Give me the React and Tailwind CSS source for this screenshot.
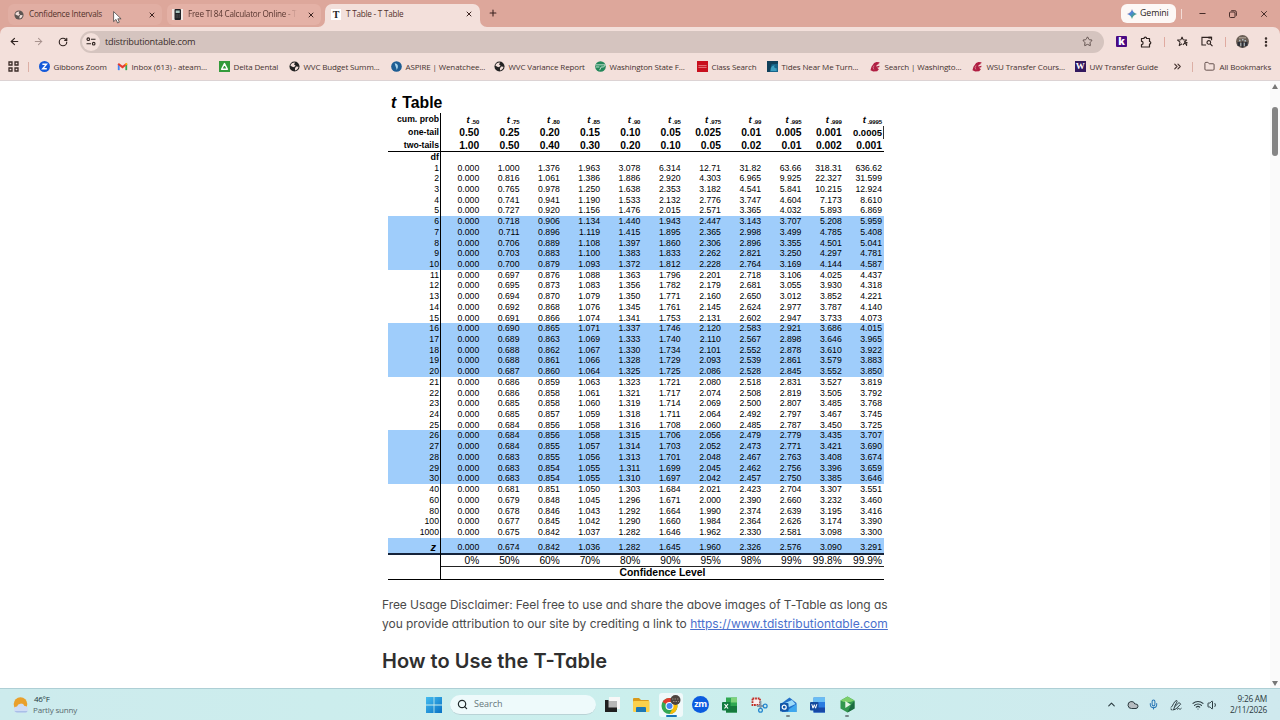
import {
    ArrowLeft, ArrowRight, RotateCw, X, Plus, Minus, Star, Search, ChevronUp, ChevronsRight,
    Folder, Wifi, Volume1, Mic, EllipsisVertical, Cloud,
} from "lucide-react";

const columns = [
    [".50", "0.50", "1.00", "0%"],
    [".75", "0.25", "0.50", "50%"],
    [".80", "0.20", "0.40", "60%"],
    [".85", "0.15", "0.30", "70%"],
    [".90", "0.10", "0.20", "80%"],
    [".95", "0.05", "0.10", "90%"],
    [".975", "0.025", "0.05", "95%"],
    [".99", "0.01", "0.02", "98%"],
    [".995", "0.005", "0.01", "99%"],
    [".999", "0.001", "0.002", "99.8%"],
    [".9995", "0.0005", "0.001", "99.9%"],
];

const tableData = `1 0.000 1.000 1.376 1.963 3.078 6.314 12.71 31.82 63.66 318.31 636.62
2 0.000 0.816 1.061 1.386 1.886 2.920 4.303 6.965 9.925 22.327 31.599
3 0.000 0.765 0.978 1.250 1.638 2.353 3.182 4.541 5.841 10.215 12.924
4 0.000 0.741 0.941 1.190 1.533 2.132 2.776 3.747 4.604 7.173 8.610
5 0.000 0.727 0.920 1.156 1.476 2.015 2.571 3.365 4.032 5.893 6.869
6 0.000 0.718 0.906 1.134 1.440 1.943 2.447 3.143 3.707 5.208 5.959
7 0.000 0.711 0.896 1.119 1.415 1.895 2.365 2.998 3.499 4.785 5.408
8 0.000 0.706 0.889 1.108 1.397 1.860 2.306 2.896 3.355 4.501 5.041
9 0.000 0.703 0.883 1.100 1.383 1.833 2.262 2.821 3.250 4.297 4.781
10 0.000 0.700 0.879 1.093 1.372 1.812 2.228 2.764 3.169 4.144 4.587
11 0.000 0.697 0.876 1.088 1.363 1.796 2.201 2.718 3.106 4.025 4.437
12 0.000 0.695 0.873 1.083 1.356 1.782 2.179 2.681 3.055 3.930 4.318
13 0.000 0.694 0.870 1.079 1.350 1.771 2.160 2.650 3.012 3.852 4.221
14 0.000 0.692 0.868 1.076 1.345 1.761 2.145 2.624 2.977 3.787 4.140
15 0.000 0.691 0.866 1.074 1.341 1.753 2.131 2.602 2.947 3.733 4.073
16 0.000 0.690 0.865 1.071 1.337 1.746 2.120 2.583 2.921 3.686 4.015
17 0.000 0.689 0.863 1.069 1.333 1.740 2.110 2.567 2.898 3.646 3.965
18 0.000 0.688 0.862 1.067 1.330 1.734 2.101 2.552 2.878 3.610 3.922
19 0.000 0.688 0.861 1.066 1.328 1.729 2.093 2.539 2.861 3.579 3.883
20 0.000 0.687 0.860 1.064 1.325 1.725 2.086 2.528 2.845 3.552 3.850
21 0.000 0.686 0.859 1.063 1.323 1.721 2.080 2.518 2.831 3.527 3.819
22 0.000 0.686 0.858 1.061 1.321 1.717 2.074 2.508 2.819 3.505 3.792
23 0.000 0.685 0.858 1.060 1.319 1.714 2.069 2.500 2.807 3.485 3.768
24 0.000 0.685 0.857 1.059 1.318 1.711 2.064 2.492 2.797 3.467 3.745
25 0.000 0.684 0.856 1.058 1.316 1.708 2.060 2.485 2.787 3.450 3.725
26 0.000 0.684 0.856 1.058 1.315 1.706 2.056 2.479 2.779 3.435 3.707
27 0.000 0.684 0.855 1.057 1.314 1.703 2.052 2.473 2.771 3.421 3.690
28 0.000 0.683 0.855 1.056 1.313 1.701 2.048 2.467 2.763 3.408 3.674
29 0.000 0.683 0.854 1.055 1.311 1.699 2.045 2.462 2.756 3.396 3.659
30 0.000 0.683 0.854 1.055 1.310 1.697 2.042 2.457 2.750 3.385 3.646
40 0.000 0.681 0.851 1.050 1.303 1.684 2.021 2.423 2.704 3.307 3.551
60 0.000 0.679 0.848 1.045 1.296 1.671 2.000 2.390 2.660 3.232 3.460
80 0.000 0.678 0.846 1.043 1.292 1.664 1.990 2.374 2.639 3.195 3.416
100 0.000 0.677 0.845 1.042 1.290 1.660 1.984 2.364 2.626 3.174 3.390
1000 0.000 0.675 0.842 1.037 1.282 1.646 1.962 2.330 2.581 3.098 3.300`
    .split("\n")
    .map((line) => line.trim().split(" "));

const zRow = ["0.000", "0.674", "0.842", "1.036", "1.282", "1.645", "1.960", "2.326", "2.576", "3.090", "3.291"];

const DarkGlobe = ({ className = "w-[11px] h-[11px]", fill = "#222" }) => (
    <svg className={className} viewBox="0 0 12 12">
        <circle cx="6" cy="6" r="5.500" fill={fill} />
        <path d="M1.500 5C2.200 2.800 4.500 1.500 6.500 1.800L5.500 3.800 7.200 5 5.500 6.800 3.500 6.400ZM7.600 6l2.800.3C10 8.500 8.600 10 6.600 10.300L6.500 8.200Z" fill="#f2dfda" />
    </svg>
);

const Cougar = () => (
    <svg className="w-[11px] h-[11px]" viewBox="0 0 12 12">
        <path d="M4.500 2.200 7 1l4 .4-2.200 1 1.600.7-3 1.200L6.700 6l3.800-.8-.5 1.600-2.300.6 2 1.600-1.900 2.200-4.300.3L.5 10 1.600 6.300Z" fill="#b01e42" />
        <path d="M4.400 5 3.400 7.300l.8 1.900" stroke="#f2dfda" strokeWidth=".5" fill="none" />
    </svg>
);

const bookmarks = [
    {
        title: "Gibbons Zoom",
        width: "w-[78px]",
        icon: (
            <svg className="w-[11px] h-[11px]" viewBox="0 0 12 12">
                <circle cx="6" cy="6" r="6" fill="#1459d9" />
                <path d="M3.700 3.500h4.500L4 8.500h4.500" stroke="#fff" strokeWidth="1.500" fill="none" />
            </svg>
        ),
    },
    {
        title: "Inbox (613) - ateam...",
        width: "w-[102px]",
        icon: (
            <svg className="w-[11px] h-[11px]" viewBox="0 0 12 12">
                <path d="M1.900 10V3.500" stroke="#4285f4" strokeWidth="2" />
                <path d="M10.100 10V3.500" stroke="#34a853" strokeWidth="2" />
                <path d="M1.300 3l4.700 3.700L10.700 3" stroke="#e63b2e" strokeWidth="2.200" fill="none" />
                <path d="M9.200 5V2.800l1.900-.8v2Z" fill="#fbbc04" />
            </svg>
        ),
    },
    {
        title: "Delta Dental",
        width: "w-[70px]",
        icon: (
            <svg className="w-[11px] h-[11px]" viewBox="0 0 12 12">
                <path d="M0 0h12v12H0Z" fill="#349b3b" />
                <path d="M6 2.800 9.200 9H2.800Z" stroke="#fff" strokeWidth="1.500" fill="none" strokeLinejoin="round" />
            </svg>
        ),
    },
    { title: "WVC Budget Summ...", width: "w-[102px]", icon: <DarkGlobe /> },
    {
        title: "ASPIRE | Wenatchee...",
        width: "w-[103px]",
        icon: (
            <svg className="w-[11px] h-[11px]" viewBox="0 0 12 12">
                <circle cx="6" cy="6" r="5.800" fill="#1d5d93" />
                <path d="M4 2.500c4 .5 4.500 4 2.200 7.200C6 7 4.500 5.500 4 2.500Z" fill="#a9d4ec" />
            </svg>
        ),
    },
    { title: "WVC Variance Report", width: "w-[101px]", icon: <DarkGlobe /> },
    {
        title: "Washington State F...",
        width: "w-[102px]",
        icon: (
            <svg className="w-[11px] h-[11px]" viewBox="0 0 12 12">
                <circle cx="6" cy="6" r="5.800" fill="#23875a" />
                <path d="M.8 4.200h10.500L9.500 6.500H6.800L5 10M1 6.500h3.800" stroke="#cfe6d8" strokeWidth="1" fill="none" />
            </svg>
        ),
    },
    {
        title: "Class Search",
        width: "w-[70px]",
        icon: (
            <svg className="w-[11px] h-[11px]" viewBox="0 0 12 12">
                <path d="M0 0h12v12H0Z" fill="#c8101e" />
                <path d="M1.500 5h9M1.500 7h9" stroke="#f09ca0" strokeWidth=".8" />
            </svg>
        ),
    },
    {
        title: "Tides Near Me Turn...",
        width: "w-[103px]",
        icon: (
            <svg className="w-[11px] h-[11px]" viewBox="0 0 12 12">
                <path d="M0 0h12v12H0Z" fill="#17658a" />
                <path d="M0 0h12v3L5 3.500 3 12H0Z" fill="#10405a" />
                <path d="M4 10c0-4 2-5.500 5-5-2 .5-1.500 3 1.500 3v3H4Z" fill="#3d9fc0" />
            </svg>
        ),
    },
    { title: "Search | Washingto...", width: "w-[102px]", icon: <Cougar /> },
    { title: "WSU Transfer Cours...", width: "w-[103px]", icon: <Cougar /> },
    {
        title: "UW Transfer Guide",
        width: "w-[98px]",
        icon: <span className="w-[11px] h-[11px] bg-[#33195f] text-white text-[9px] leading-[11px] font-bold text-center tracking-[-0.5px] font-['Liberation_Serif',serif]">W</span>,
    },
];

const TabTitle = ({ children, className = "" }) => (
    <span className={`whitespace-nowrap text-[8.200px] tracking-[-0.25px] text-[#54322c] ${className}`}>{children}</span>
);

const TabStrip = () => (
    <div className="h-[27px] flex items-end bg-[#dda79b] relative">
        <div className="ml-2 w-[154px] h-[21px] mb-[2px] rounded-md bg-[#e1aea3] flex items-center pl-[6px] pr-[6px]">
            <DarkGlobe className="w-[10px] h-[10px]" fill="#5d5552" />
            <TabTitle className="ml-[5px]">Confidence Intervals</TabTitle>
            <X className="ml-auto w-[8px] h-[8px] text-[#3b2320]" strokeWidth={3} />
        </div>
        <div className="ml-[5px] w-[154px] h-[21px] mb-[2px] rounded-md bg-[#e4b1a6] flex items-center pl-[5px] pr-[6px]">
            <svg className="w-[11px] h-[11px] shrink-0" viewBox="0 0 11 11">
                <path d="M0 0h11v11H0Z" fill="#f3e9e5" />
                <rect x="2.500" y="0" width="6.500" height="11" rx="1" fill="#202226" />
                <path d="M3.700 1.500h4v2.500h-4Z" fill="#a9c6c0" />
                <path d="M3.700 6h4M3.700 8h4" stroke="#777" strokeWidth=".8" strokeDasharray="1 .5" />
            </svg>
            <TabTitle className="ml-[5px] bg-linear-to-r from-[#54322c] from-88% to-[#e4b1a6] bg-clip-text text-transparent">Free TI 84 Calculator Online - T</TabTitle>
            <X className="ml-auto w-[8px] h-[8px] text-[#3b2320] shrink-0" strokeWidth={3} />
        </div>
        <svg className="w-[7px] h-[7px] ml-[-3px]" viewBox="0 0 7 7"><path d="M7 0v7H0A7 7 0 0 0 7 0Z" fill="#f3e0db" /></svg>
        <div className="w-[155px] h-[23px] rounded-t-[7px] bg-[#f3e0db] flex items-center pl-[6px] pr-[7px] pb-[3px]">
            <span className="w-[10px] h-[11px] bg-white text-[#222] font-bold text-[10px] leading-[11px] text-center font-['Liberation_Serif',serif]">T</span>
            <TabTitle className="ml-[5px]">T Table - T Table</TabTitle>
            <X className="ml-auto w-[8px] h-[8px] text-[#3b2320]" strokeWidth={3} />
        </div>
        <svg className="w-[7px] h-[7px]" viewBox="0 0 7 7"><path d="M0 0v7h7A7 7 0 0 1 0 0Z" fill="#f3e0db" /></svg>
        <Plus className="w-[10px] h-[10px] ml-[1px] mb-[9px] text-[#3b2320]" strokeWidth={2.600} />
        <div className="ml-auto h-[27px] flex items-center">
            <div className="w-[55px] h-[19px] rounded-[6px] bg-[#fdf8f6] flex items-center pl-[6px]">
                <svg className="w-[10px] h-[10px]" viewBox="0 0 10 10">
                    <defs>
                        <linearGradient id="gem" x1="0" y1="0" x2="1" y2="1">
                            <stop offset=".1" stopColor="#e8745c" />
                            <stop offset=".4" stopColor="#4b85dd" />
                            <stop offset=".8" stopColor="#47a86b" />
                        </linearGradient>
                    </defs>
                    <path d="M5 0C5.600 2.600 7.400 4.400 10 5 7.400 5.600 5.600 7.400 5 10 4.400 7.400 2.600 5.600 0 5 2.600 4.400 4.400 2.600 5 0Z" fill="url(#gem)" />
                </svg>
                <span className="ml-[3px] text-[8.800px] text-[#2b2321] tracking-[-0.1px]">Gemini</span>
            </div>
            <span className="w-px h-[10px] bg-[#f3dcd6] ml-[5px]" />
            <Minus className="w-[9px] h-[9px] ml-[16px] text-[#3b2320]" strokeWidth={2.500} />
            <svg className="w-[8px] h-[8px] ml-[22px] text-[#3b2320]" viewBox="0 0 8 8" fill="none" stroke="currentColor" strokeWidth=".9">
                <rect x=".5" y="2" width="5.500" height="5.500" rx="1" />
                <path d="M2.200.7h3.600q1.600 0 1.600 1.600v3.500" />
            </svg>
            <X className="w-[10px] h-[10px] ml-[22px] mr-[11px] text-[#3b2320]" strokeWidth={2.200} />
        </div>
        <svg className="absolute left-[113px] top-[11px] w-[10px] h-[13px]" viewBox="0 0 10 13">
            <path d="M.6.600v10l2.400-2.200 1.600 3.600 1.700-.8L4.800 7.800h3.300Z" fill="#fff" stroke="#333" strokeWidth=".7" />
        </svg>
    </div>
);

const Toolbar = () => (
    <div className="bg-[#dda79b]">
        <div className="h-[29px] rounded-t-[7px] bg-[#f3e0db] flex items-center text-[#2f2320]">
            <ArrowLeft className="w-[11px] h-[11px] ml-[9px]" strokeWidth={2.500} />
            <ArrowRight className="w-[11px] h-[11px] ml-[13px] text-[#a8938e]" strokeWidth={2.300} />
            <RotateCw className="w-[10px] h-[10px] ml-[14px]" strokeWidth={2.700} />
            <div className="ml-[12px] w-[1024px] h-[22px] rounded-full bg-[#d5c4bf] flex items-center pl-[2px] pr-[11px]">
                <span className="w-[18px] h-[18px] rounded-full bg-[#f3e0db] flex items-center justify-center">
                    <svg className="w-[10px] h-[9px]" viewBox="0 0 10 9" fill="none" stroke="currentColor" strokeWidth="1.100">
                        <circle cx="2.300" cy="2.200" r="1.300" /><path d="M5 2.200h4.500M.5 6.700H5" /><circle cx="7.700" cy="6.700" r="1.300" />
                    </svg>
                </span>
                <span className="ml-[5px] text-[9.200px] tracking-[-0.230px] text-[#3a2d2a]">tdistributiontable.com</span>
                <Star className="ml-auto w-[11px] h-[11px] text-[#5b4c48]" strokeWidth={2} />
            </div>
            <span className="ml-[12px] w-[11px] h-[11px] rounded-[1px] bg-[#4a0a83] text-white text-[10px] leading-[10px] font-extrabold text-center">k</span>
            <svg className="ml-[13px] w-[12px] h-[12px]" viewBox="0 0 12 12" fill="none" stroke="currentColor" strokeWidth="1.200" strokeLinejoin="round">
                <path d="M1.500 2.500H4a1.300 1.300 0 0 1 2.600 0h2.900v3a1.300 1.300 0 0 1 0 2.600v2.900h-8V8.500a1.600 1.600 0 0 0 0-3.200Z" />
            </svg>
            <span className="ml-[12px] w-px h-[10px] bg-[#e0aaa0]" />
            <svg className="ml-[12px] w-[11px] h-[11px]" viewBox="0 0 12 12" fill="none" stroke="currentColor" strokeWidth="1.100" strokeLinejoin="round">
                <path d="M5.500 1 6.800 4.200l3.700.3-2.800 2.300M5.500 1 4.200 4.200.6 4.500l2.700 2.300-.9 3.700 3.100-2M6.500 9.700l2-2.200 1.700 2M8.500 6.500l3 .8M10.500 8v3" />
            </svg>
            <svg className="ml-[13px] w-[12px] h-[11px]" viewBox="0 0 13 12" fill="none" stroke="currentColor" strokeWidth="1.200">
                <path d="M5.500 9.800H1V1.500h10.500v3" /><path d="M8 1.800h3.500" strokeWidth="2" /><circle cx="8.500" cy="7" r="2" /><path d="m10 8.500 2.500 2.500" />
            </svg>
            <span className="ml-[12px] w-px h-[10px] bg-[#e0aaa0]" />
            <svg className="ml-[10px] w-[13px] h-[13px]" viewBox="0 0 13 13">
                <circle cx="6.500" cy="6.500" r="6.500" fill="#6b5f56" />
                <path d="M3 2h7v1.500H3Z" fill="#a09488" />
                <path d="M1.500 7h2.500v4h-2.500ZM5.500 6.500h2v6h-2ZM9 7h2.500V11H9Z" fill="#2e3038" />
                <path d="M3 4.800h1.500v1.500H3ZM6 4h1.500v1.500H6ZM8.500 5h1.500v1.500H8.500ZM4.300 8h1v3h-1ZM7.800 8h1v3h-1Z" fill="#adbcc3" />
            </svg>
            <EllipsisVertical className="ml-[11px] w-[12px] h-[12px]" strokeWidth={3} />
        </div>
    </div>
);

const BookmarkBar = () => (
    <div className="h-[25px] bg-[#f3e0db] border-b border-[#dcd3d4] flex items-center pb-[3px] text-[#463330] text-[8px] tracking-[-0.13px] whitespace-nowrap">
        <svg className="ml-[8px] w-[11px] h-[11px] shrink-0" viewBox="0 0 11 11" fill="none" stroke="#3b2c29" strokeWidth="1.300">
            <path d="M1 1h3v3H1ZM7 1h3v3H7ZM1 7h3v3H1ZM7 7h3v3H7Z" />
        </svg>
        <span className="ml-[9px] mr-[9.500px] w-px h-[10px] bg-[#dcafa5]" />
        {bookmarks.map((item) => (
            <div key={item.title} className={`flex items-center gap-[4px] shrink-0 ${item.width}`}>
                <span className="flex shrink-0">{item.icon}</span>
                <span>{item.title}</span>
            </div>
        ))}
        <ChevronsRight className="-ml-[1px] w-[11px] h-[11px] shrink-0" strokeWidth={2.500} />
        <span className="ml-[9px] w-px h-[10px] bg-[#dcafa5]" />
        <Folder className="ml-[11px] w-[11px] h-[11px] shrink-0" strokeWidth={1.800} />
        <span className="ml-[5px]">All Bookmarks</span>
    </div>
);

const Row = ({ label, values, className = "", labelClass = "" }) => (
    <div className={`grid grid-cols-[53px_repeat(11,1fr)] text-right ${className}`}>
        <div className={`border-r border-black ${labelClass}`}>{label}</div>
        {values.map((value, i) => (
            <div key={i} className="pr-[2px]">{value}</div>
        ))}
    </div>
);

const TTable = () => (
    <div className="w-[496px] text-black font-['Liberation_Sans',sans-serif]">
        <h2 className="h-[21px] leading-[21px] pl-[3px] text-[15.800px] font-bold"><i>t</i><span className="ml-[6px]">Table</span></h2>
        <div className="border-b border-black font-bold text-[10.300px]">
            <Row
                label="cum. prob"
                labelClass="text-[8.700px] pr-[1px]"
                className="h-[13px] leading-[13px]"
                values={columns.map((c) => (
                    <span key={c[0]}><i className="text-[9.500px]">t</i><span className="text-[6px] tracking-[-0.1px] relative top-[1px] ml-[1.500px]">{c[0]}</span></span>
                ))}
            />
            <Row
                label="one-tail"
                labelClass="text-[8.700px] pr-[1px]"
                className="h-[12.500px] leading-[13px]"
                values={columns.map((c, i) => (i === 10 ? <div key={i} className="text-[9.500px] -mr-[2px] pr-[1px] border-r border-[#333]">{c[1]}</div> : c[1]))}
            />
            <Row label="two-tails" labelClass="text-[8.700px] pr-[1px]" className="h-[12.500px] leading-[13px]" values={columns.map((c) => c[2])} />
        </div>
        <Row label="df" labelClass="font-bold pr-[1px]" className="h-[10.500px] leading-[11px] text-[9px]" values={columns.map(() => "")} />
        {tableData.map(([df, ...values], i) => (
            <Row
                key={df}
                label={df}
                values={values}
                labelClass="pr-[1px]"
                className={`h-[10.720px] leading-[10.720px] text-[8.700px] ${i < 30 && Math.floor(i / 5) % 2 === 1 ? "bg-[#9fcdfb]" : ""}`}
            />
        ))}
        <div className="border-b-2 border-[#15233a]">
            <Row
                label={<i>z</i>}
                labelClass="font-bold text-[11px] pr-[4px]"
                values={zRow}
                className="h-[15px] leading-[18px] text-[8.700px] bg-[#9fcdfb]"
            />
        </div>
        <Row label="" values={columns.map((c) => c[3])} className="h-[11px] leading-[12px] text-[10.200px]" />
        <div className="h-[14px] flex border-b border-black">
            <div className="w-[53px] border-r border-black" />
            <div className="flex-1 border-t border-[#222] text-center text-[10.400px] leading-[12px] font-bold">Confidence Level</div>
        </div>
    </div>
);

const Page = () => (
    <div className="h-[607px] bg-white flex overflow-hidden">
        <div className="flex-1 pt-[11px] pl-[388px]">
            <TTable />
            <div className="-ml-[6px] mt-[15px] font-['Inter',sans-serif] text-[#4a4a4a]">
                <p className="text-[12px] leading-[19.300px] whitespace-nowrap [font-feature-settings:'cv11']">
                    <span className="tracking-[-0.075px]">Free Usage Disclaimer: Feel free to use and share the above images of T-Table as long as</span>
                    <br />
                    <span className="tracking-[-0.03px]">you provide attribution to our site by crediting a link to </span>
                    <a className="text-[#4a70cd] underline tracking-[0.04px]">https://www.tdistributiontable.com</a>
                </p>
                <h1 className="mt-[13px] text-[20px] leading-[30px] font-semibold text-[#2f2f2f] whitespace-nowrap [font-feature-settings:'cv11']">How to Use the T-Table</h1>
            </div>
        </div>
        <div className="w-[10px] bg-[#fafafa] flex flex-col items-center pt-[3px] pb-[2px]">
            <svg className="w-[6px] h-[5px]" viewBox="0 0 6 5"><path d="M3 0l3 5H0Z" fill="#777" /></svg>
            <div className="mt-[18px] w-[6px] h-[49px] rounded-full bg-[#858585]" />
            <svg className="w-[6px] h-[5px] mt-auto" viewBox="0 0 6 5"><path d="M0 0h6L3 5Z" fill="#777" /></svg>
        </div>
    </div>
);

const appIcons = [
    {
        name: "desktops",
        icon: (
            <svg className="w-[16px] h-[16px] -ml-[2px]" viewBox="0 0 16 16">
                <path d="M5 0h11v12H5Z" fill="#f8f8f8" /><path d="M4 4h9v8H4Z" fill="#b7b7b7" /><path d="M1 3h3.500v7.500H13V15H1Z" fill="#1f1f1f" />
            </svg>
        ),
    },
    {
        name: "files",
        icon: (
            <svg className="w-[17px] h-[16px]" viewBox="0 0 17 16">
                <path d="M0 2q0-1 1-1h5l2 2h7q1 0 1 1v3H0Z" fill="#d99a1b" /><rect y="4" width="16.500" height="11" rx="1" fill="#fbd14b" /><path d="M3 15v-4q0-1 1-1h8q1 0 1 1v4Z" fill="#1d78b4" />
            </svg>
        ),
    },
    {
        name: "chrome",
        active: true,
        icon: (
            <svg className="w-[20px] h-[20px]" viewBox="0 0 20 20">
                <circle cx="8.500" cy="11" r="8" fill="#34a853" />
                <path d="M8.500 11 1.600 7A8 8 0 0 1 15.400 7H8.500Z" fill="#e33b2e" />
                <path d="M15.400 7A8 8 0 0 1 8.500 19l3.500-6-.5-6Z" fill="#fbbc05" />
                <circle cx="8.500" cy="11" r="4" fill="#fff" /><circle cx="8.500" cy="11" r="3" fill="#4285f4" />
                <circle cx="14.500" cy="5" r="5" fill="#4d443f" /><path d="M11 4h7M12 6.500h6" stroke="#9a8b80" strokeWidth="1" strokeDasharray="1.500 1" />
            </svg>
        ),
    },
    {
        name: "zoom",
        icon: <span className="w-[17px] h-[17px] rounded-full bg-[#0b5cdf] text-white text-[9px] leading-[15px] font-bold text-center tracking-[-0.3px]">zm</span>,
    },
    {
        name: "excel",
        icon: (
            <svg className="w-[16px] h-[16px]" viewBox="0 0 16 16">
                <path d="M4 .5h11v15H4Z" fill="#2fa851" /><path d="M9 .5h6v5H9Z" fill="#7ed37b" /><path d="M4 9h11v6.500H4Z" fill="#167a3d" />
                <rect y="5" width="8.500" height="8.500" rx="1" fill="#107c41" /><path d="m2.500 7 3.500 4.500M6 7l-3.500 4.500" stroke="#fff" strokeWidth="1.200" />
            </svg>
        ),
    },
    {
        name: "snip",
        icon: (
            <svg className="w-[17px] h-[16px]" viewBox="0 0 17 16" fill="none">
                <path d="M1.500 1.500h7.500v6.500H1.500Z" fill="#fbeeee" stroke="#c02d26" strokeWidth="1.800" strokeDasharray="1.800 .8" />
                <path d="M9.500 4v8M6 9h7" stroke="#8795a1" strokeWidth="1.800" /><circle cx="14.200" cy="9" r="1.900" stroke="#2788cf" strokeWidth="1.300" /><circle cx="9.500" cy="13.300" r="1.900" stroke="#2788cf" strokeWidth="1.300" />
            </svg>
        ),
    },
    {
        name: "outlook",
        dot: true,
        icon: (
            <svg className="w-[17px] h-[16px]" viewBox="0 0 17 16">
                <path d="M2 6 9.500.5 16.500 6v9H2Z" fill="#2370c8" /><path d="m5 6 7-3 3.500 4L9 10Z" fill="#9edcfa" /><path d="M16.500 7v8H5Z" fill="#3ea7ee" />
                <rect y="6" width="8.500" height="8.500" rx="1" fill="#1357a8" /><circle cx="4.200" cy="10.200" r="2" stroke="#fff" strokeWidth="1.200" fill="none" />
            </svg>
        ),
    },
    {
        name: "word",
        icon: (
            <svg className="w-[16px] h-[16px]" viewBox="0 0 16 16">
                <path d="M3.500.5H15v15H3.500Z" fill="#2a7be0" /><path d="M3.500.5H15v4.500H3.500Z" fill="#68bdf5" /><path d="M3.500 10.500H15v5H3.500Z" fill="#1748a8" />
                <rect y="5" width="8.500" height="8.500" rx="1" fill="#124a9e" /><path d="m1.800 7.200 1.200 4 1.300-3.500 1.300 3.500 1.200-4" stroke="#fff" strokeWidth="1" fill="none" />
            </svg>
        ),
    },
    {
        name: "recorder",
        dot: true,
        icon: (
            <svg className="w-[17px] h-[17px]" viewBox="0 0 17 17">
                <path d="m8.500.5 7 4v8l-7 4-7-4v-8Z" fill="#33974f" /><path d="m8.500.5 7 4-4 1.500L5 6 1.500 4.500Z" fill="#7ccf6b" /><path d="m15.500 5v7.500l-7 4L12 9Z" fill="#1b6a41" />
                <path d="m6.300 5 5.500 3.500-5.500 3.500Z" fill="#e6f5e6" />
            </svg>
        ),
    },
];

const Taskbar = () => (
    <div className="h-[32px] border-t border-[#aecfd5] bg-linear-to-r from-[#cdebed] via-[#cbefed] to-[#cfe9ee] flex items-center text-[#31474d]">
        <svg className="ml-[13px] w-[16px] h-[16px]" viewBox="0 0 16 16">
            <circle cx="7.500" cy="7" r="6.800" fill="#e9a02c" />
            <path d="M4 15.500a3 3 0 0 1 0-6 4 4 0 0 1 7.500-.5 3.300 3.300 0 0 1 1 6.500Z" fill="#cfdcf5" />
            <path d="M4 15.500a3 3 0 0 1-2.500-1.500h13q-.7 1.500-2 1.500Z" fill="#a9bfe8" />
        </svg>
        <div className="ml-[4px] w-[392px] text-[8px] leading-[10.500px]">
            <div className="ml-px tracking-[-0.3px] text-[#22363b]">46°F</div>
            <div className="text-[#57696d] tracking-[-0.15px]">Partly sunny</div>
        </div>
        <svg className="w-[16px] h-[16px] ml-[1px]" viewBox="0 0 16 16">
            <defs>
                <linearGradient id="win" x1="0" y1="0" x2="1" y2="1"><stop offset="0" stopColor="#45bdf0" /><stop offset="1" stopColor="#0871c4" /></linearGradient>
            </defs>
            <path d="M0 0h7.600v7.600H0ZM8.400 0H16v7.600H8.400ZM0 8.400h7.600V16H0ZM8.400 8.400H16V16H8.400Z" fill="url(#win)" />
        </svg>
        <div className="ml-[8px] w-[146px] h-[20px] rounded-full bg-[#eefafb] border-b border-[#b9d3d6] flex items-center pl-[7px]">
            <Search className="w-[11px] h-[11px] text-[#20292b]" strokeWidth={2.600} />
            <span className="ml-[6px] text-[9px] text-[#66787b]">Search</span>
        </div>
        <div className="flex ml-[2px]">
            {appIcons.map((app) => (
                <div key={app.name} className="w-[29.300px] h-[31px] flex items-center justify-center relative">
                    {app.active && <span className="absolute w-[24px] h-[24px] top-[4px] rounded-[3px] bg-[#f0f9fa]" />}
                    <span className="relative flex">{app.icon}</span>
                    {app.active && <span className="absolute bottom-[3px] w-[11px] h-[2px] rounded-full bg-[#1876b8]" />}
                    {app.dot && <span className="absolute bottom-[3px] w-[4px] h-[2px] rounded-full bg-[#78898c]" />}
                </div>
            ))}
        </div>
        <div className="ml-auto flex items-center text-[#2b3b40]">
            <ChevronUp className="w-[11px] h-[11px]" strokeWidth={2.500} />
            <Cloud className="ml-[10px] w-[12px] h-[12px] fill-[#b5bcc0]" strokeWidth={2} />
            <Mic className="ml-[9px] w-[11px] h-[11px] text-[#2574b5]" strokeWidth={2.200} />
            <svg className="ml-[11px] w-[12px] h-[12px]" viewBox="0 0 12 12" fill="none" stroke="currentColor" strokeWidth="1">
                <path d="M1 8.500C3 7 4 2 6.500 1.500 8.500 1.500 5 6 4.500 7.500M3.500 11l1-3L9 3.500l1.700 1.700L6 9.800ZM1 9.500q-.5 1.500 1.500 1.500M7 10.500q1.500-2 2.500-.5 1 .5 2-.8" />
            </svg>
            <Wifi className="ml-[10px] w-[12px] h-[12px]" strokeWidth={2.200} />
            <Volume1 className="ml-[3px] w-[12px] h-[12px]" strokeWidth={2} />
            <div className="w-[48px] mr-[13px] text-right text-[8.300px] leading-[10.500px] tracking-[-0.25px]">
                <div>9:26 AM</div>
                <div>2/11/2026</div>
            </div>
        </div>
    </div>
);

export default function App() {
    return (
        <div className="w-[1280px] h-[720px] overflow-hidden flex flex-col font-['Open_Sans','Noto_Sans',sans-serif]">
            <TabStrip />
            <Toolbar />
            <BookmarkBar />
            <Page />
            <Taskbar />
        </div>
    );
}
